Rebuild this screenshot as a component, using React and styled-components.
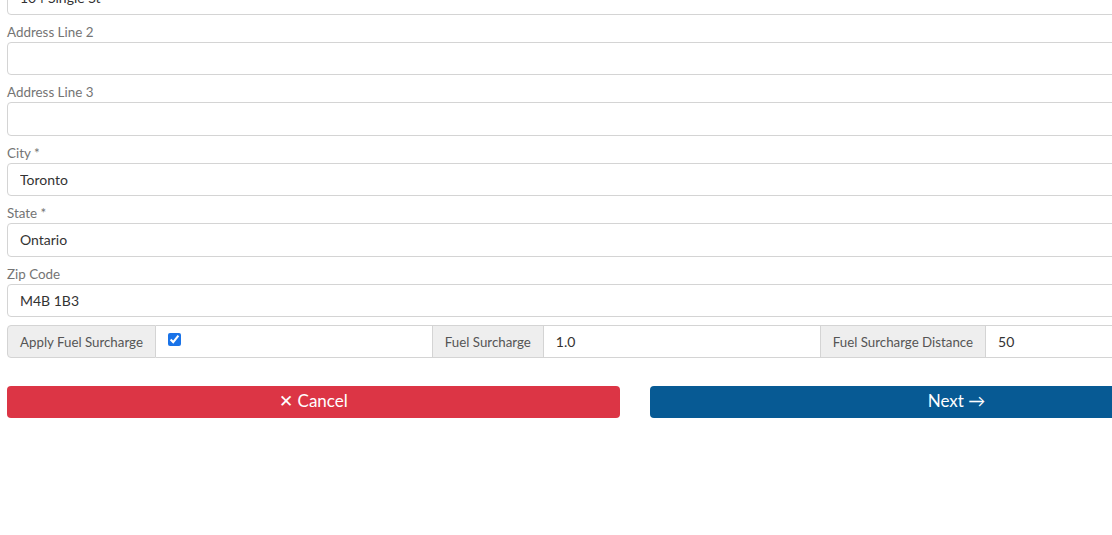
import React from 'react'
import { useState } from 'react'
import styled, { createGlobalStyle } from 'styled-components'

const GlobalStyle = createGlobalStyle`
  html, body {
    margin: 0;
    padding: 0;
    background: #fff;
    overflow: hidden;
    font-family: Lato, "Open Sans", sans-serif;
  }
`

const App = () => {
  const [data, setData] = useState({
    address1: "104 Single St",
    address2: "",
    address3: "",
    city: "Toronto",
    state: "Ontario",
    zip: "M4B 1B3",
    applyFuel: true,
    fuelSurcharge: "1.0",
    fuelDistance: "50",
  })

  const FormHandler = (e) => {
    const { name, type, checked, value } = e.target
    setData({
      ...data,
      [name]: type === "checkbox" ? checked : value
    })
  }

  return (
    <>
      <GlobalStyle />
      <Page>
        <Form onSubmit={(e) => e.preventDefault()}>
          <Input type="text" name="address1" value={data.address1} onChange={FormHandler} />
          <Field>
            <Label>Address Line 2</Label>
            <Input type="text" name="address2" value={data.address2} onChange={FormHandler} />
          </Field>
          <Field>
            <Label>Address Line 3</Label>
            <Input type="text" name="address3" value={data.address3} onChange={FormHandler} />
          </Field>
          <Field>
            <Label>City *</Label>
            <Input type="text" name="city" value={data.city} onChange={FormHandler} />
          </Field>
          <Field>
            <Label>State *</Label>
            <Input type="text" name="state" value={data.state} onChange={FormHandler} />
          </Field>
          <Field>
            <Label>Zip Code</Label>
            <Input type="text" name="zip" value={data.zip} onChange={FormHandler} />
          </Field>

          <InputGroup>
            <Addon first>Apply Fuel Surcharge</Addon>
            <CheckCell>
              <Check type="checkbox" name="applyFuel" checked={data.applyFuel} onChange={FormHandler} />
            </CheckCell>
            <Addon>Fuel Surcharge</Addon>
            <GroupInput type="text" name="fuelSurcharge" value={data.fuelSurcharge} onChange={FormHandler} />
            <Addon>Fuel Surcharge Distance</Addon>
            <GroupInput type="text" name="fuelDistance" value={data.fuelDistance} onChange={FormHandler} last />
          </InputGroup>

          <Buttons>
            <Button type="button" color="#dc3545">✕ Cancel</Button>
            <Button type="submit" color="#075a94">Next →</Button>
          </Buttons>
        </Form>
      </Page>
    </>
  )
}

export default App

const Page = styled.div`
  width: 1256px;
  margin-left: 7px;
  margin-top: -19px;
`

const Form = styled.form`
  display: flex;
  flex-direction: column;
`

const Field = styled.div`
  display: flex;
  flex-direction: column;
`

const Label = styled.label`
  display: block;
  font-size: 13.4px;
  line-height: 20px;
  padding-top: 7px;
  margin-bottom: 0;
  color: #747474;
`

const Input = styled.input`
  box-sizing: border-box;
  width: 100%;
  height: 33.5px;
  padding: 0 12px;
  border: 1px solid #d4d4d4;
  border-radius: 4px;
  font-family: inherit;
  font-size: 14px;
  color: #333;
  background: #fff;
  outline: none;
`

const InputGroup = styled.div`
  display: flex;
  height: 33px;
  margin-top: 8px;
`

const Addon = styled.div`
  display: flex;
  align-items: center;
  padding: 0 12px;
  background: #eee;
  border: 1px solid #d4d4d4;
  border-left: ${p => p.first ? '1px solid #d4d4d4' : 'none'};
  border-radius: ${p => p.first ? '4px 0 0 4px' : '0'};
  font-size: 13.3px;
  color: #555;
  white-space: nowrap;
`

const CheckCell = styled.div`
  flex: 1;
  display: flex;
  align-items: flex-start;
  padding: 7px 12px 0;
  border: 1px solid #d4d4d4;
  border-left: none;
`

const Check = styled.input`
  margin: 0;
  width: 13px;
  height: 13px;
  accent-color: #1a73e8;
`

const GroupInput = styled.input`
  flex: 1;
  min-width: 0;
  box-sizing: border-box;
  height: 33px;
  padding: 0 12px;
  border: 1px solid #d4d4d4;
  border-left: none;
  border-radius: ${p => p.last ? '0 4px 4px 0' : '0'};
  font-family: inherit;
  font-size: 14px;
  color: #333;
  outline: none;
`

const Buttons = styled.div`
  display: grid;
  grid-template-columns: 1fr 1fr;
  gap: 30px;
  margin-top: 28px;
`

const Button = styled.button`
  height: 32px;
  padding: 0 0 3px;
  border: none;
  border-radius: 4px;
  background-color: ${p => p.color};
  color: #fff;
  font-family: inherit;
  font-size: 17px;
  cursor: pointer;
`
